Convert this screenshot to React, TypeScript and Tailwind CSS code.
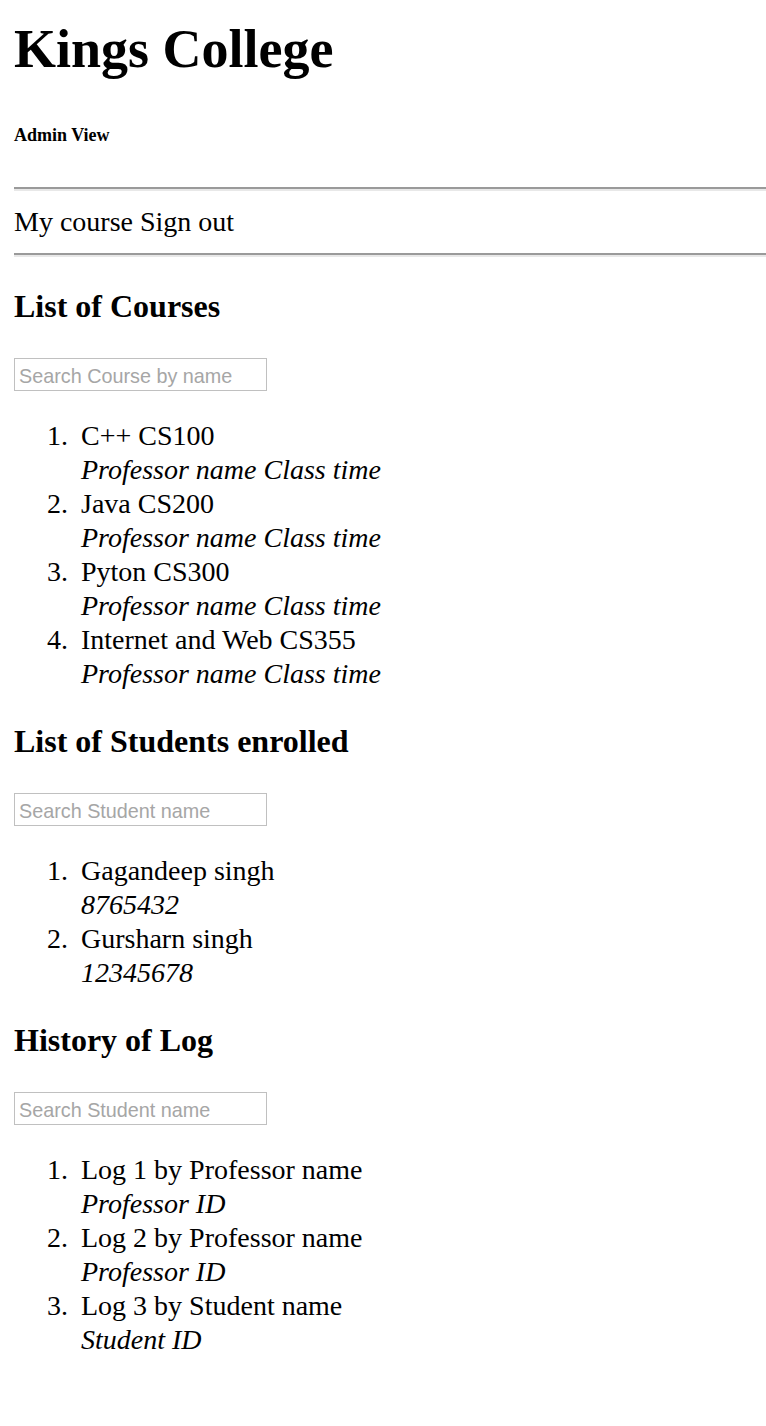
const courses = [
  { name: 'C++ CS100', sub: 'Professor name Class time' },
  { name: 'Java CS200', sub: 'Professor name Class time' },
  { name: 'Pyton CS300', sub: 'Professor name Class time' },
  { name: 'Internet and Web CS355', sub: 'Professor name Class time' },
];

const students = [
  { name: 'Gagandeep singh', sub: '8765432' },
  { name: 'Gursharn singh', sub: '12345678' },
];

const logs = [
  { name: 'Log 1 by Professor name', sub: 'Professor ID' },
  { name: 'Log 2 by Professor name', sub: 'Professor ID' },
  { name: 'Log 3 by Student name', sub: 'Student ID' },
];

type Item = { name: string; sub: string };

const Rule = ({ className }: { className: string }) => (
  <div className={`mr-[-14px] h-[4px] border-t-2 border-b-2 border-t-[#9a9a9a] border-b-[#e8e8e8] ${className}`}></div>
);

const Section = ({ title, placeholder, items, top }: { title: string; placeholder: string; items: Item[]; top: string }) => (
  <section>
    <h3 className={`text-[32px] leading-[38px] font-bold ${top}`}>{title}</h3>
    <input
      type="text"
      placeholder={placeholder}
      className="mt-[33px] block w-[253px] h-[33px] border border-[#c0c0c0] px-[4px] pt-[3px] font-['Liberation_Sans',Arial,sans-serif] text-[19.8px] text-black placeholder:text-[#a6a6a6] outline-none"
    />
    <ol className="mt-[28px] pl-[33px] list-none text-[28px] leading-[34px]">
      {items.map((item, i) => (
        <li key={item.name} className="flex">
          <span className="w-[34px] shrink-0">{i + 1}.</span>
          <div>
            <div>{item.name}</div>
            <em className="block">{item.sub}</em>
          </div>
        </li>
      ))}
    </ol>
  </section>
);

export default function App() {
  return (
    <div className="min-h-screen bg-white text-black font-['Liberation_Serif','Times_New_Roman',serif] px-[14px] pt-[17px] pb-[60px] overflow-hidden">
      {/* Header */}
      <h1 className="text-[54px] leading-[64px] font-bold">Kings College</h1>
      <h6 className="mt-[43px] text-[18px] leading-[22px] font-bold">Admin View</h6>
      <Rule className="mt-[41px]" />
      <nav className="mt-[14px] text-[28px] leading-[34px]">My course Sign out</nav>
      <Rule className="mt-[14px]" />

      <Section title="List of Courses" placeholder="Search Course by name" items={courses} top="mt-[30px]" />
      <Section title="List of Students enrolled" placeholder="Search Student name" items={students} top="mt-[31px]" />
      <Section title="History of Log" placeholder="Search Student name" items={logs} top="mt-[31px]" />
    </div>
  );
}
